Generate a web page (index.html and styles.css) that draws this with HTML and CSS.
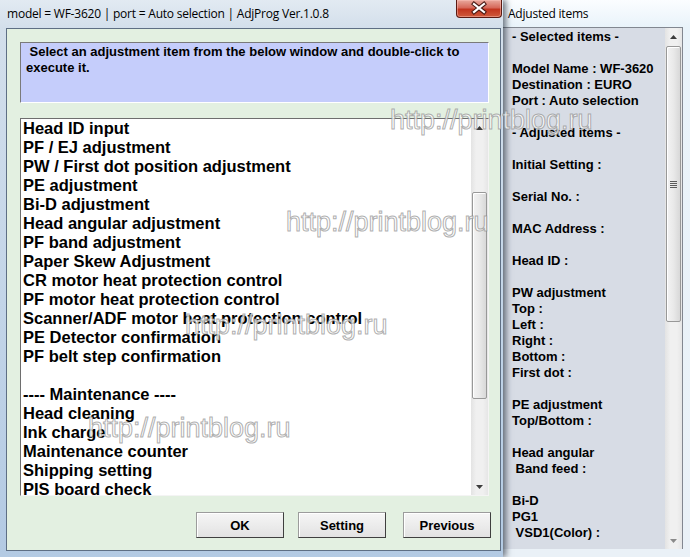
FILE: index.html
```html
<!DOCTYPE html>
<html>
<head>
<meta charset="utf-8">
<link rel="stylesheet" href="styles.css">
</head>
<body>
<div class="desk">
  <div class="main">
    <div class="titlebar">
      <span class="title">model = WF-3620 | port = Auto selection | AdjProg Ver.1.0.8</span>
      <div class="close">
        <svg width="44" height="17" viewBox="0 0 44 17">
          <path d="M17 4 L27 12 M27 4 L17 12" stroke="#4a1a14" stroke-width="4.2" stroke-linecap="square" fill="none"/>
          <path d="M17 4 L27 12 M27 4 L17 12" stroke="#ffffff" stroke-width="2.2" stroke-linecap="square" fill="none"/>
        </svg>
      </div>
    </div>
    <div class="client">
      <div class="info">&nbsp;Select an adjustment item from the below window and double-click to execute it.</div>
      <div class="list">
        <div class="items">
          <div>Head ID input</div>
          <div>PF / EJ adjustment</div>
          <div>PW / First dot position adjustment</div>
          <div>PE adjustment</div>
          <div>Bi-D adjustment</div>
          <div>Head angular adjustment</div>
          <div>PF band adjustment</div>
          <div>Paper Skew Adjustment</div>
          <div>CR motor heat protection control</div>
          <div>PF motor heat protection control</div>
          <div>Scanner/ADF motor heat protection control</div>
          <div>PE Detector confirmation</div>
          <div>PF belt step confirmation</div>
          <div>&nbsp;</div>
          <div>---- Maintenance ----</div>
          <div>Head cleaning</div>
          <div>Ink charge</div>
          <div>Maintenance counter</div>
          <div>Shipping setting</div>
          <div>PIS board check</div>
        </div>
        <div class="vscroll">
          <div class="arrow"><svg width="7" height="4" viewBox="0 0 7 4"><path d="M0 4 L3.5 0 L7 4 Z" fill="#3c3c3c"/></svg></div>
          <div class="track">
            <div class="thumb list-thumb"></div>
          </div>
          <div class="arrow"><svg width="7" height="4" viewBox="0 0 7 4"><path d="M0 0 L3.5 4 L7 0 Z" fill="#3c3c3c"/></svg></div>
        </div>
      </div>
      <div class="buttons">
        <div class="btn">OK</div>
        <div class="btn">Setting</div>
        <div class="btn btn-last">Previous</div>
      </div>
    </div>
  </div>
  <div class="side">
    <div class="side-title">Adjusted items</div>
    <div class="side-panel">
      <div class="side-text">- Selected items -

Model Name : WF-3620
Destination : EURO
Port : Auto selection

- Adjusted items -

Initial Setting :

Serial No. :

MAC Address :

Head ID :

PW adjustment
Top :
Left :
Right :
Bottom :
First dot :

PE adjustment
Top/Bottom :

Head angular
 Band feed :

Bi-D
PG1
 VSD1(Color) :</div>
      <div class="vscroll side-scroll">
        <div class="arrow"><svg width="7" height="4" viewBox="0 0 7 4"><path d="M0 4 L3.5 0 L7 4 Z" fill="#3c3c3c"/></svg></div>
        <div class="track">
          <div class="thumb side-thumb">
            <svg width="7" height="7" viewBox="0 0 7 7"><path d="M0 0.5 H7 M0 2.5 H7 M0 4.5 H7 M0 6.5 H7" stroke="#5a5a5a" stroke-width="1"/></svg>
          </div>
        </div>
        <div class="arrow"><svg width="7" height="4" viewBox="0 0 7 4"><path d="M0 0 L3.5 4 L7 0 Z" fill="#8a8a8a"/></svg></div>
      </div>
    </div>
  </div>
  <div class="wm wm1">http://printblog.ru</div>
  <div class="wm wm2">http://printblog.ru</div>
  <div class="wm wm3">http://printblog.ru</div>
  <div class="wm wm4">http://printblog.ru</div>
</div>
</body>
</html>
```

FILE: styles.css
```css
html, body {
  margin: 0;
  padding: 0;
}

body {
  width: 690px;
  height: 557px;
  overflow: hidden;
  background: #b9cde3;
}

.desk {
  position: relative;
  display: flex;
  width: 690px;
  height: 557px;
  overflow: hidden;
}

/* ---------- main window ---------- */
.main {
  position: relative;
  z-index: 1;
  width: 503px;
  height: 557px;
  flex: none;
  display: flex;
  flex-direction: column;
  background: linear-gradient(to bottom, #e2eaf2 0px, #d3dfeb 28px, #c3d5e8 300px, #b3cae3 557px);
  box-shadow: 3px 0 6px rgba(20, 30, 45, 0.6);
}

.titlebar {
  height: 28px;
  flex: none;
  display: flex;
  justify-content: space-between;
  align-items: flex-start;
}

.title {
  font-family: "Open Sans", "Noto Sans", sans-serif;
  font-size: 12px;
  letter-spacing: -0.22px;
  color: #000;
  padding: 6px 0 0 7px;
  line-height: 16px;
  white-space: nowrap;
}

.close {
  width: 44px;
  height: 17px;
  margin-right: 1px;
  border: 1px solid #5b1a12;
  border-top: none;
  border-radius: 0 0 4px 4px;
  background: linear-gradient(to bottom, #e9a99d 0%, #d6695a 45%, #c2351f 55%, #cf5a3c 100%);
  box-shadow: inset 0 0 0 1px rgba(255, 200, 190, 0.45);
  display: flex;
}

.client {
  flex: 1;
  margin: 0 2px 6px 6px;
  border: 1px solid #5e6f84;
  background: #e3f0e1;
  padding: 13px 0 0 13px;
  display: flex;
  flex-direction: column;
}

.info {
  width: 457px;
  height: 58px;
  border-top: 1px solid #7a7a7a;
  border-left: 1px solid #7a7a7a;
  border-bottom: 1px solid #ffffff;
  border-right: 1px solid #ffffff;
  background: #c5cdfb;
  padding: 1px 5px 0 5px;
  font-family: "Liberation Sans", Arial, sans-serif;
  font-weight: bold;
  font-size: 13px;
  line-height: 16px;
  color: #000;
  flex: none;
}

.list {
  margin-top: 15px;
  width: 467px;
  height: 376px;
  border-top: 1px solid #6e6e6e;
  border-left: 1px solid #6e6e6e;
  border-bottom: 1px solid #f4f4f4;
  border-right: 1px solid #f4f4f4;
  background: #ffffff;
  display: flex;
  flex: none;
}

.items {
  flex: 1;
  overflow: hidden;
  padding-left: 2px;
  font-family: "Liberation Sans", Arial, sans-serif;
  font-weight: bold;
  font-size: 16.5px;
  line-height: 19px;
  color: #000;
  white-space: nowrap;
}

.vscroll {
  width: 17px;
  flex: none;
  display: flex;
  flex-direction: column;
  background: linear-gradient(to right, #e3e3e3, #f0f0f0 30%, #f0f0f0 70%, #e6e6e6);
}

.arrow {
  height: 17px;
  flex: none;
  display: flex;
  align-items: center;
  justify-content: center;
}

.track {
  flex: 1;
  display: flex;
  flex-direction: column;
}

.thumb {
  margin: 0 1px;
  border: 1px solid #989898;
  border-radius: 2px;
  background: linear-gradient(to right, #f3f3f3, #e9e9e9 50%, #d8d8d8);
  box-shadow: inset 1px 1px 0 #ffffff;
  display: flex;
  align-items: center;
  justify-content: center;
}

.list-thumb {
  margin-top: 56px;
  height: 205px;
}

.buttons {
  margin-top: 16px;
  display: flex;
  justify-content: flex-end;
  padding-right: 9px;
  gap: 14px;
}

.btn {
  width: 86px;
  height: 24px;
  border-top: 1px solid #9c9c9c;
  border-left: 1px solid #9c9c9c;
  border-bottom: 1px solid #3f3f3f;
  border-right: 1px solid #3f3f3f;
  background: linear-gradient(to bottom, #f6f6f6, #ececec 50%, #e2e2e2);
  box-shadow: inset 1px 1px 0 #ffffff;
  font-family: "Liberation Sans", Arial, sans-serif;
  font-weight: bold;
  font-size: 13px;
  color: #000;
  display: flex;
  align-items: center;
  justify-content: center;
}

.btn-last {
  margin-left: 3px;
}

/* ---------- side window ---------- */
.side {
  flex: 1;
  display: flex;
  flex-direction: column;
  background: linear-gradient(to bottom, #fbfdff 0px, #e9f3fa 27px, #eaf1f7 100%);
}

.side-title {
  height: 27px;
  flex: none;
  font-family: "Open Sans", "Noto Sans", sans-serif;
  font-size: 12px;
  letter-spacing: -0.22px;
  line-height: 16px;
  padding: 6px 0 0 5px;
  box-sizing: border-box;
  color: #000;
  white-space: nowrap;
}

.side-panel {
  width: 179px;
  height: 521px;
  flex: none;
  border-top: 1px solid #828790;
  border-right: 1px solid #828790;
  background: #d7dce5;
  display: flex;
}

.side-text {
  flex: 1;
  overflow: hidden;
  white-space: pre;
  padding: 1px 0 0 9px;
  font-family: "Liberation Sans", Arial, sans-serif;
  font-weight: bold;
  font-size: 13px;
  line-height: 16px;
  color: #000;
}

.side-thumb {
  margin-top: 1px;
  height: 274px;
}

/* ---------- watermark overlay ---------- */
.wm {
  position: absolute;
  z-index: 5;
  font-family: "Liberation Sans", Arial, sans-serif;
  font-size: 27px;
  line-height: 27px;
  color: rgba(255, 255, 255, 0.8);
  -webkit-text-stroke: 1px rgba(140, 140, 140, 0.7);
  white-space: nowrap;
  pointer-events: none;
}

.wm1 { left: 390px; top: 107px; }
.wm2 { left: 286px; top: 209px; }
.wm3 { left: 185px; top: 312px; }
.wm4 { left: 88px; top: 415px; }
```
